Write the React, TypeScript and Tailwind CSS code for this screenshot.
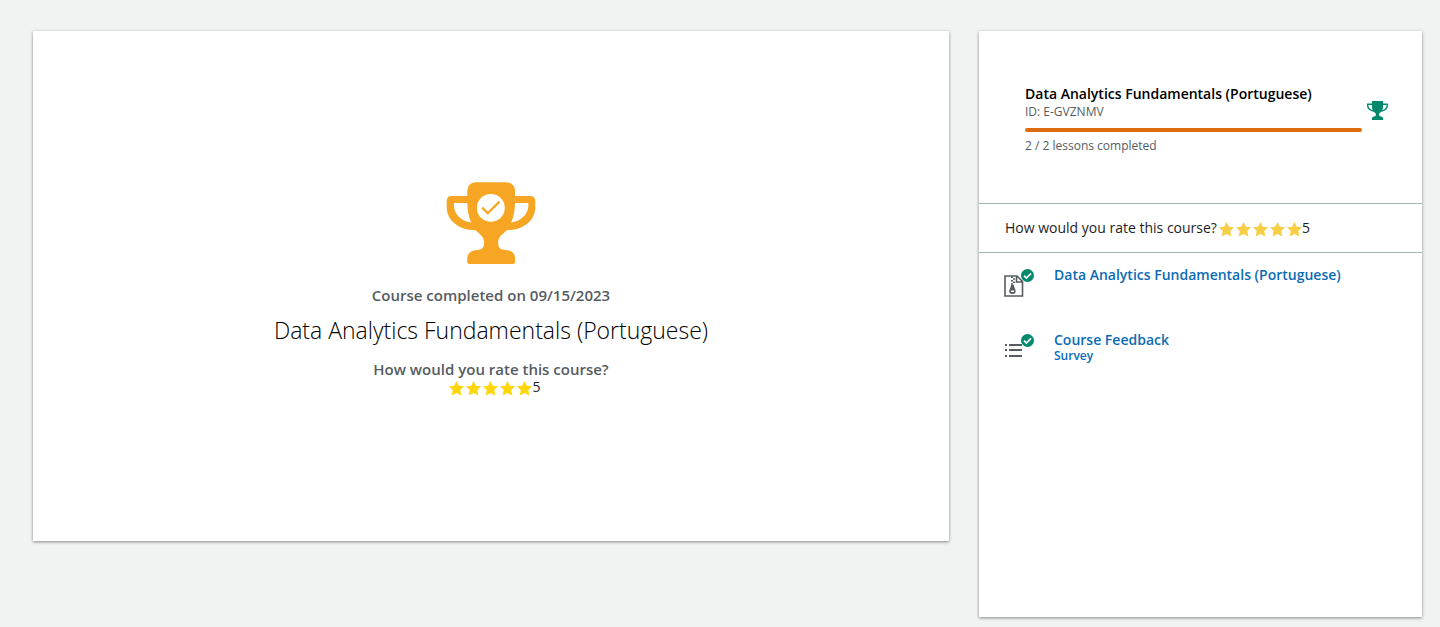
import React from "react";

type Tone = "gold" | "amber";

function Rating({ value, tone }: { value: number; tone: Tone }) {
  return (
    <div className="flex items-center">
      <span role="img" aria-label={`${value} stars`} className="flex gap-0.5 pt-0.5">
        {Array.from({ length: value }, (_, i) => (
          <svg
            key={i}
            viewBox="0 0 14 14"
            className={tone === "gold" ? "h-[15px] w-[15px] fill-[#ffd60a]" : "h-[15px] w-[15px] fill-[#f7cf46]"}
          >
            <path d="M7 0 9.2 4.4 14 5 10.5 8.4 11.5 13.6 7 11.2 2.5 13.6 3.5 8.4 0 5 4.8 4.4Z" />
          </svg>
        ))}
      </span>
      <span className="text-sm leading-5 text-[#1d1d27]">{value}</span>
    </div>
  );
}

function CompletedTrophy() {
  return (
    <svg viewBox="49 35 267 247" className="h-[82px] w-[90px]" aria-hidden="true">
      <path
        fill="#f6a623"
        fillRule="evenodd"
        d="M136 36H229Q254 38 255 62V77H300Q316 77 316 93V110C316 150 281 180 230 180C220 191 204 197 204 218C204 233 212 239 225 240Q254 241 255 265V276Q255 282 249 282H117Q111 282 111 276V265Q112 241 141 240C154 239 162 233 162 218C162 197 146 191 136 180C85 180 49 150 49 110V93Q49 77 65 77H111V62Q112 38 136 36ZM71 98V107C72 133 94 153 123 157C115 140 112 121 111 98ZM255 98C254 121 251 140 243 157C272 153 294 133 295 107V98Z"
      />
      <circle cx="182" cy="113" r="42" fill="#fff" />
      <path d="M156 112 173 129 208 94" fill="none" stroke="#f6a623" strokeWidth="7" />
    </svg>
  );
}

function SmallTrophy() {
  return (
    <svg viewBox="0 0 64 58" className="h-[19px] w-[21px] shrink-0" aria-hidden="true">
      <path
        fill="#00896b"
        fillRule="evenodd"
        d="M15 0H49V8H64V14C64 25 54 32 43 33C40 36 37 37 37 41C37 45 38 46 43 47Q49 48 49 53V58H15V53Q15 48 21 47C26 46 27 45 27 41C27 37 24 36 21 33C10 32 0 25 0 14V8H15ZM4 12V14C5 21 10 26 17 28Q15 22 15 12ZM49 12Q49 22 47 28C54 26 59 21 60 14V12Z"
      />
    </svg>
  );
}

function CheckBadge() {
  return (
    <svg viewBox="0 0 13 13" className="absolute -top-1.5 left-[17px] h-[13px] w-[13px]" aria-hidden="true">
      <circle cx="6.5" cy="6.5" r="6.5" fill="#00896b" />
      <path d="M3 6.7 5.4 9 10 4.4" fill="none" stroke="#fff" strokeWidth="1.7" />
    </svg>
  );
}

function ZipIcon() {
  return (
    <svg viewBox="0 0 20 24" className="h-6 w-5" aria-hidden="true">
      <path d="M1 1H13L18.5 6.5V21H1ZM12.5 1V7H18.5" fill="none" stroke="#565c62" strokeWidth="1.6" />
      <path
        d="M7 1.5h2v1.5H7ZM9 3.2h2v1.5H9ZM7 4.9h2v1.5H7ZM9 6.6h2v1.5H9ZM7 8.3h2v1.5H7Z"
        fill="#565c62"
      />
      <path
        fillRule="evenodd"
        fill="#565c62"
        d="M7.5 9.5h2L11.6 15.5Q12 19 8.5 19T5.2 15.5ZM7 15.5V17H10V15.5Z"
      />
    </svg>
  );
}

function SurveyIcon() {
  return (
    <svg viewBox="0 0 20 24" className="h-6 w-5" aria-hidden="true">
      <path
        d="M1 4h2v2H1ZM5 4h13v2H5ZM1 9h2v2H1ZM5 9h13v2H5ZM1 15h2v2H1ZM5 15h13v2H5Z"
        fill="#565c62"
      />
    </svg>
  );
}

function Lesson({ title, kind, icon }: { title: string; kind?: string; icon: React.ReactNode }) {
  return (
    <li className="flex min-h-[65px] gap-[30px]">
      <span className="relative mt-[9px] h-6 w-5 shrink-0">
        {icon}
        <CheckBadge />
      </span>
      <a href="#lesson" className="flex flex-col font-semibold text-[#0b6cb5]">
        <span className="text-sm leading-[18px]">{title}</span>
        {kind && <span className="text-xs leading-[14px]">{kind}</span>}
      </a>
    </li>
  );
}

const card = "bg-white shadow-[0_1px_3px_rgba(0,0,0,0.45)]";

export default function App() {
  return (
    <div className="flex min-h-screen items-start gap-[30px] bg-[#f1f3f3] pt-[31px] pr-[18px] pb-2.5 pl-[33px] font-['Open_Sans',sans-serif]">
      <main className={`flex min-h-[510px] flex-1 flex-col items-center pt-[151px] ${card}`}>
        <CompletedTrophy />
        <p className="mt-[21px] text-[15px] leading-5 font-semibold text-[#565c62]">
          Course completed on 09/15/2023
        </p>
        <h1 className="mt-[9px] text-[23px] leading-8 font-light text-black">
          Data Analytics Fundamentals (Portuguese)
        </h1>
        <p className="mt-[13px] text-[15px] leading-5 font-semibold text-[#565c62]">
          How would you rate this course?
        </p>
        <div className="-mt-0.5 pl-2">
          <Rating value={5} tone="gold" />
        </div>
      </main>

      <aside className={`min-h-[586px] w-[443px] shrink-0 ${card}`}>
        <header className="flex h-[172px] items-start gap-[5px] pt-[53px] pr-[34px] pl-[46px]">
          <div className="flex-1">
            <h2 className="text-sm leading-5 font-semibold text-black">
              Data Analytics Fundamentals (Portuguese)
            </h2>
            <p className="text-xs leading-4 font-medium text-[#565c62]">ID: E-GVZNMV</p>
            <div
              role="progressbar"
              aria-label="Lessons completed"
              aria-valuemin={0}
              aria-valuemax={2}
              aria-valuenow={2}
              className="mt-2 h-1 rounded-sm bg-[#dd6b10]"
            />
            <p className="mt-1.5 text-xs leading-4 font-medium text-[#565c62]">2 / 2 lessons completed</p>
          </div>
          <div className="pt-[17px]">
            <SmallTrophy />
          </div>
        </header>
        <div className="flex h-[50px] items-center gap-0.5 border-y border-[#a5b5b3] px-[26px]">
          <p className="text-sm leading-5 text-[#1d1d27]">How would you rate this course?</p>
          <Rating value={5} tone="amber" />
        </div>
        <ul className="px-[25px] pt-[13px]">
          <Lesson title="Data Analytics Fundamentals (Portuguese)" icon={<ZipIcon />} />
          <Lesson title="Course Feedback" kind="Survey" icon={<SurveyIcon />} />
        </ul>
      </aside>
    </div>
  );
}
